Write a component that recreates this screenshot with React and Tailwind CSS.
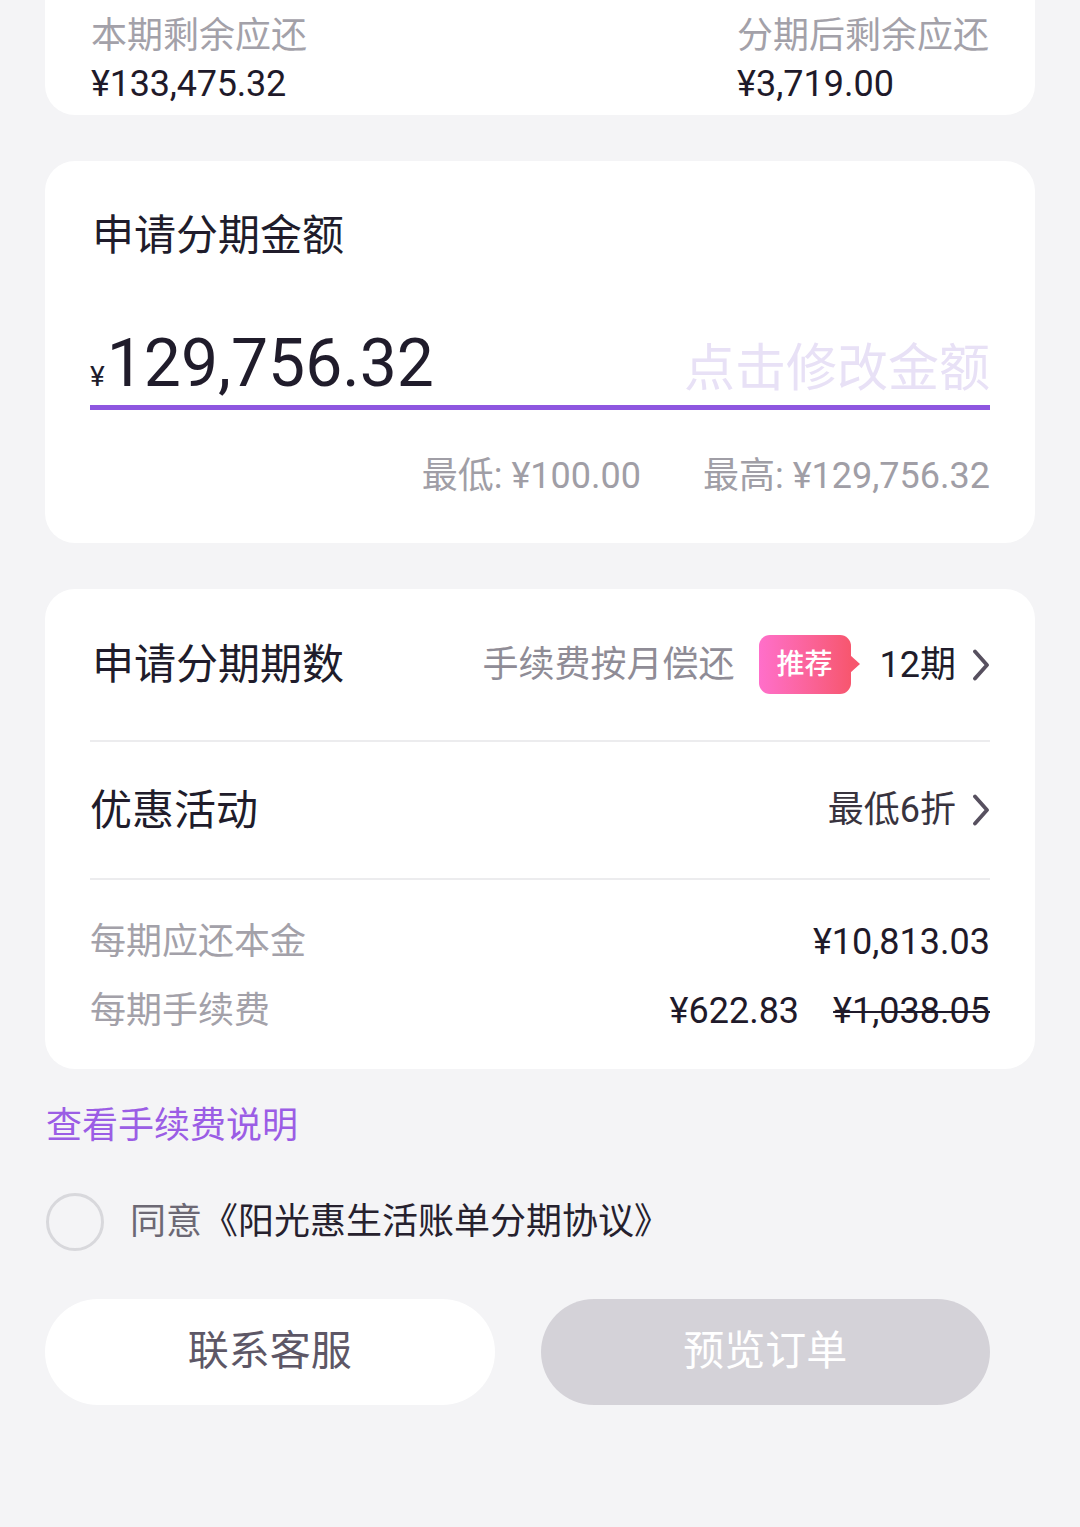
import React from "react";

const FONT = "font-['Roboto','Noto_Sans_CJK_SC',sans-serif]";

function Chevron() {
  return (
    <svg width="18" height="32" viewBox="0 0 18 32" className="shrink-0">
      <path d="M3 2.5 L15 16 L3 29.5" fill="none" stroke="#57505f" strokeWidth="3.8" strokeLinecap="round" strokeLinejoin="round" />
    </svg>
  );
}

export default function App() {
  return (
    <div className={`min-h-[1527px] w-[1080px] bg-[#f4f4f6] ${FONT} pb-[121px]`}>
      <div className="px-[45px]">
        {/* Card 1 */}
        <div className="bg-white rounded-b-[30px] px-[46px] pt-[12px] pb-[7px] flex justify-between">
          <div className="flex flex-col">
            <span className="text-[36px] leading-[48px] text-[#a3a1a9]">本期剩余应还</span>
            <span className="text-[36px] leading-[48px] text-[#1f1a2a] tracking-[-0.2px]">¥133,475.32</span>
          </div>
          <div className="flex flex-col">
            <span className="text-[36px] leading-[48px] text-[#a3a1a9]">分期后剩余应还</span>
            <span className="text-[36px] leading-[48px] text-[#1f1a2a]">¥3,719.00</span>
          </div>
        </div>

        {/* Card 2 */}
        <div className="mt-[46px] bg-white rounded-[30px] px-[45px] pt-[49px] pb-[43px]">
          <div className="text-[42px] leading-[52px] text-[#201c2b] pl-[2px]">申请分期金额</div>
          <div className="mt-[62px] h-[76px] flex items-baseline justify-between">
            <div className="flex items-baseline text-[#201c2b]">
              <span className="text-[28px] mr-[2px]">¥</span>
              <span className="text-[66px] leading-[80px]">129,756.32</span>
            </div>
            <span className="text-[51px] leading-[80px] text-[#e8e1f6]">点击修改金额</span>
          </div>
          <div className="mt-[5px] h-[5px] bg-[#8e56e0]" />
          <div className="mt-[42px] flex justify-end gap-[62px] text-[36px] leading-[48px] text-[#a09ea6]">
            <span>最低: ¥100.00</span>
            <span>最高: ¥129,756.32</span>
          </div>
        </div>

        {/* Card 3 */}
        <div className="mt-[46px] bg-white rounded-[30px] px-[45px]">
          <div className="h-[151px] flex items-center justify-between">
            <span className="text-[42px] text-[#201c2b] pl-[2px]">申请分期期数</span>
            <div className="flex items-center">
              <span className="text-[36px] text-[#8f8c96]">手续费按月偿还</span>
              <div className="relative ml-[24px] w-[92px] h-[59px] rounded-[11px] bg-gradient-to-r from-[#ff6fca] to-[#f7566e] flex items-center justify-center">
                <span className="text-[28px] font-medium text-white">推荐</span>
                <div className="absolute right-[-9px] top-[20px] w-0 h-0 border-y-[9px] border-y-transparent border-l-[10px] border-l-[#f7566e]" />
              </div>
              <span className="ml-[29px] text-[36px] text-[#201c2b]">12期</span>
              <span className="ml-[16px]"><Chevron /></span>
            </div>
          </div>
          <div className="h-[2px] bg-[#ececee]" />
          <div className="h-[136px] flex items-center justify-between">
            <span className="text-[42px] text-[#201c2b]">优惠活动</span>
            <div className="flex items-center">
              <span className="text-[36px] text-[#38333e]">最低6折</span>
              <span className="ml-[16px]"><Chevron /></span>
            </div>
          </div>
          <div className="h-[2px] bg-[#ececee]" />
          <div className="pt-[38px] pb-[34px] flex flex-col gap-[21px]">
            <div className="flex justify-between text-[36px] leading-[48px]">
              <span className="text-[#a3a1a9]">每期应还本金</span>
              <span className="text-[#1f1a2a]">¥10,813.03</span>
            </div>
            <div className="flex justify-between text-[36px] leading-[48px]">
              <span className="text-[#a3a1a9]">每期手续费</span>
              <div className="flex gap-[34px] text-[#1f1a2a]">
                <span>¥622.83</span>
                <span className="line-through decoration-[2px]">¥1,038.05</span>
              </div>
            </div>
          </div>
        </div>
      </div>

      <div className="mt-[33px] pl-[46px] text-[36px] leading-[48px] text-[#9b5de5]">查看手续费说明</div>

      <div className="mt-[43px] pl-[46px] flex items-center h-[58px]">
        <div className="w-[58px] h-[58px] rounded-full border-[3px] border-[#d8d8dc] box-border" />
        <span className="ml-[26px] text-[36px] text-[#6c6874]">同意</span>
        <span className="text-[36px] text-[#26212e]">《阳光惠生活账单分期协议》</span>
      </div>

      <div className="mt-[48px] pl-[45px] pr-[90px] flex gap-[46px]">
        <div className="flex-1 h-[106px] rounded-full bg-white flex items-center justify-center text-[41px] text-[#5d5766]">联系客服</div>
        <div className="flex-1 h-[106px] rounded-full bg-[#d4d2d8] flex items-center justify-center text-[41px] text-white">预览订单</div>
      </div>
    </div>
  );
}
